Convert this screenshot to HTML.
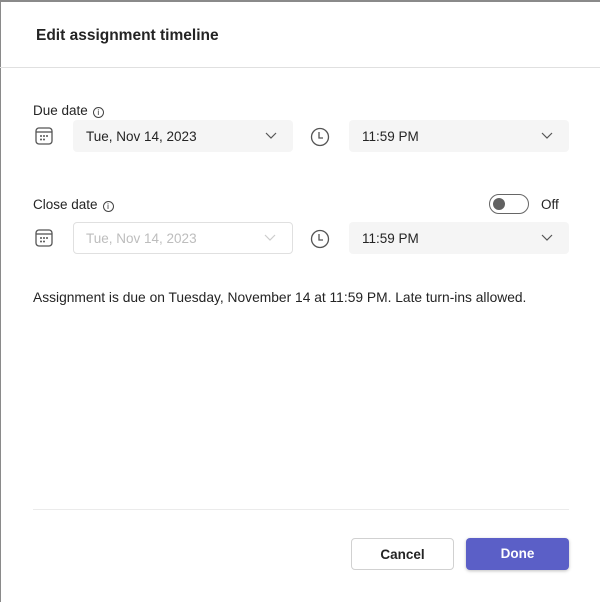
<!DOCTYPE html>
<html><head><style>
*{box-sizing:border-box;margin:0;padding:0}
body{width:600px;height:602px;background:#fff;font-family:"Liberation Sans",sans-serif;color:#242424;position:relative;overflow:hidden}
.a{position:absolute}
.t{font-size:15.5px;font-weight:bold;left:36px;top:27px}
.sep{left:0;right:0;top:67px;height:1px;background:#e0e0e0}
.lbl{font-size:13.5px;left:33px}
.info{display:inline-block;width:11px;height:11px;border:1px solid #444;border-radius:50%;font-size:8px;text-align:center;line-height:10px;margin-left:5px;vertical-align:0px}
.box{height:32px;background:#f5f5f5;border-radius:4px;font-size:13.5px;line-height:33px;padding-left:13px}
.dis{background:#fff;border:1px solid #e0e0e0;color:#bdbdbd;line-height:31px;padding-left:12px}
.chev{position:absolute;right:16px;top:12px}
.btn{height:32px;border-radius:4px;font-size:13.5px;font-weight:bold;text-align:center;line-height:32px}
</style></head><body>
<div class="a" style="left:0;top:0;width:600px;height:2px;background:#8a8a8a"></div>
<div class="a" style="left:0;top:0;width:1px;height:602px;background:#8a8a8a"></div>
<div class="a t">Edit assignment timeline</div>
<div class="a sep"></div>
<div class="a lbl" style="top:103px">Due date<span class="info">i</span></div>
<svg class="a" style="left:35px;top:127px" width="18" height="18" viewBox="0 0 18 18"><rect x="1" y="1" width="16" height="16" rx="3" fill="none" stroke="#555" stroke-width="1.3"/><line x1="1" y1="5" x2="17" y2="5" stroke="#555" stroke-width="1.3"/><g fill="#555"><circle cx="6" cy="9" r="1"/><circle cx="9" cy="9" r="1"/><circle cx="12" cy="9" r="1"/><circle cx="6" cy="12.5" r="1"/><circle cx="9" cy="12.5" r="1"/></g></svg>
<div class="a box" style="left:73px;top:120px;width:220px">Tue, Nov 14, 2023<svg class="chev" width="12" height="8"><path d="M1 1L6 6L11 1" fill="none" stroke="#555" stroke-width="1.2"/></svg></div>
<svg class="a" style="left:310px;top:127px" width="20" height="20"><circle cx="10" cy="10" r="8.5" fill="none" stroke="#555" stroke-width="1.3"/><path d="M9 5V11H13" fill="none" stroke="#555" stroke-width="1.3"/></svg>
<div class="a box" style="left:349px;top:120px;width:220px">11:59 PM<svg class="chev" width="12" height="8"><path d="M1 1L6 6L11 1" fill="none" stroke="#555" stroke-width="1.2"/></svg></div>

<div class="a lbl" style="top:197px">Close date<span class="info">i</span></div>
<div class="a" style="left:489px;top:194px;width:40px;height:20px;border:1px solid #666;border-radius:10px"><div style="position:absolute;left:3px;top:3px;width:12px;height:12px;border-radius:50%;background:#616161"></div></div>
<div class="a" style="left:541px;top:197px;font-size:13.5px">Off</div>
<svg class="a" style="left:35px;top:229px" width="18" height="18" viewBox="0 0 18 18"><rect x="1" y="1" width="16" height="16" rx="3" fill="none" stroke="#555" stroke-width="1.3"/><line x1="1" y1="5" x2="17" y2="5" stroke="#555" stroke-width="1.3"/><g fill="#555"><circle cx="6" cy="9" r="1"/><circle cx="9" cy="9" r="1"/><circle cx="12" cy="9" r="1"/><circle cx="6" cy="12.5" r="1"/><circle cx="9" cy="12.5" r="1"/></g></svg>
<div class="a box dis" style="left:73px;top:222px;width:220px">Tue, Nov 14, 2023<svg class="chev" width="12" height="8" style="top:11px"><path d="M1 1L6 6L11 1" fill="none" stroke="#ccc" stroke-width="1.2"/></svg></div>
<svg class="a" style="left:310px;top:229px" width="20" height="20"><circle cx="10" cy="10" r="8.5" fill="none" stroke="#555" stroke-width="1.3"/><path d="M9 5V11H13" fill="none" stroke="#555" stroke-width="1.3"/></svg>
<div class="a box" style="left:349px;top:222px;width:220px">11:59 PM<svg class="chev" width="12" height="8"><path d="M1 1L6 6L11 1" fill="none" stroke="#555" stroke-width="1.2"/></svg></div>

<div class="a" style="left:33px;top:290px;font-size:13.8px">Assignment is due on Tuesday, November 14 at 11:59 PM. Late turn-ins allowed.</div>
<div class="a" style="left:33px;top:509px;width:536px;height:1px;background:#ebebeb"></div>
<div class="a btn" style="left:351px;top:538px;width:103px;border:1px solid #d1d1d1">Cancel</div>
<div class="a btn" style="left:466px;top:538px;width:103px;background:#5b5fc7;color:#fff;box-shadow:0 1px 3px rgba(0,0,0,.25)">Done</div>
</body></html>
